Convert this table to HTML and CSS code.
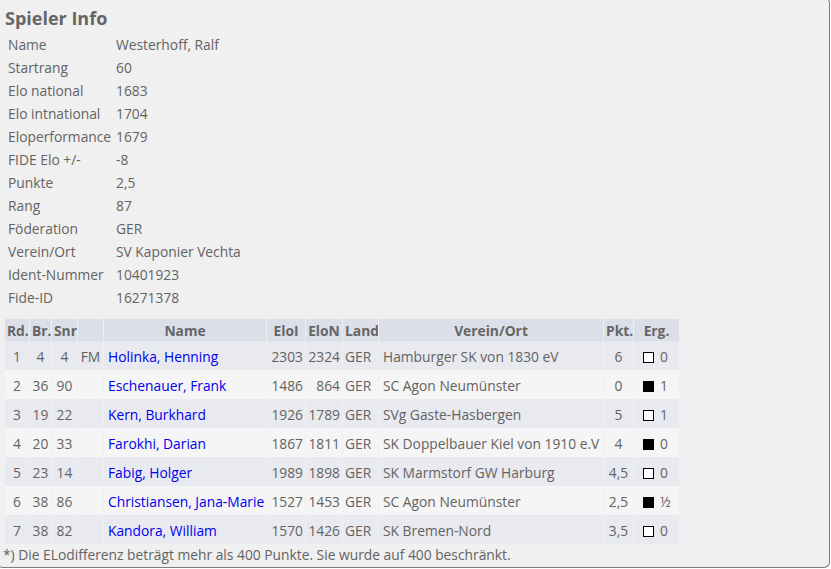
FILE: index.html
```html
<!DOCTYPE html>
<html lang="de">
<head>
<meta charset="utf-8">
<title>Spieler Info</title>
<link rel="stylesheet" href="styles.css">
</head>
<body>
<div class="panel">
  <h2 class="title">Spieler Info</h2>
  <table class="info">
    <tr><td class="lbl">Name</td><td>Westerhoff, Ralf</td></tr>
    <tr><td class="lbl">Startrang</td><td>60</td></tr>
    <tr><td class="lbl">Elo national</td><td>1683</td></tr>
    <tr><td class="lbl">Elo intnational</td><td>1704</td></tr>
    <tr><td class="lbl">Eloperformance</td><td>1679</td></tr>
    <tr><td class="lbl">FIDE Elo +/-</td><td>-8</td></tr>
    <tr><td class="lbl">Punkte</td><td>2,5</td></tr>
    <tr><td class="lbl">Rang</td><td>87</td></tr>
    <tr><td class="lbl">Föderation</td><td>GER</td></tr>
    <tr><td class="lbl">Verein/Ort</td><td>SV Kaponier Vechta</td></tr>
    <tr><td class="lbl">Ident-Nummer</td><td>10401923</td></tr>
    <tr><td class="lbl">Fide-ID</td><td>16271378</td></tr>
  </table>
  <table class="games">
    <thead>
      <tr>
        <th class="c-rd">Rd.</th><th class="c-br">Br.</th><th class="c-snr">Snr</th><th class="c-tit"></th>
        <th class="c-name">Name</th><th class="c-eloi">EloI</th><th class="c-elon">EloN</th><th class="c-land">Land</th>
        <th class="c-verein">Verein/Ort</th><th class="c-pkt">Pkt.</th><th class="c-erg">Erg.</th>
      </tr>
    </thead>
    <tbody>
      <tr class="odd"><td class="ctr">1</td><td class="ctr">4</td><td class="ctr">4</td><td class="ctr">FM</td><td class="name"><a href="#">Holinka, Henning</a></td><td class="num">2303</td><td class="num">2324</td><td class="land">GER</td><td class="verein">Hamburger SK von 1830 eV</td><td class="ctr">6</td><td class="erg"><span class="sq white"></span>0</td></tr>
      <tr class="even"><td class="ctr">2</td><td class="ctr">36</td><td class="ctr">90</td><td class="ctr"></td><td class="name"><a href="#">Eschenauer, Frank</a></td><td class="num">1486</td><td class="num">864</td><td class="land">GER</td><td class="verein">SC Agon Neumünster</td><td class="ctr">0</td><td class="erg"><span class="sq black"></span>1</td></tr>
      <tr class="odd"><td class="ctr">3</td><td class="ctr">19</td><td class="ctr">22</td><td class="ctr"></td><td class="name"><a href="#">Kern, Burkhard</a></td><td class="num">1926</td><td class="num">1789</td><td class="land">GER</td><td class="verein">SVg Gaste-Hasbergen</td><td class="ctr">5</td><td class="erg"><span class="sq white"></span>1</td></tr>
      <tr class="even"><td class="ctr">4</td><td class="ctr">20</td><td class="ctr">33</td><td class="ctr"></td><td class="name"><a href="#">Farokhi, Darian</a></td><td class="num">1867</td><td class="num">1811</td><td class="land">GER</td><td class="verein">SK Doppelbauer Kiel von 1910 e.V</td><td class="ctr">4</td><td class="erg"><span class="sq black"></span>0</td></tr>
      <tr class="odd"><td class="ctr">5</td><td class="ctr">23</td><td class="ctr">14</td><td class="ctr"></td><td class="name"><a href="#">Fabig, Holger</a></td><td class="num">1989</td><td class="num">1898</td><td class="land">GER</td><td class="verein">SK Marmstorf GW Harburg</td><td class="ctr">4,5</td><td class="erg"><span class="sq white"></span>0</td></tr>
      <tr class="even"><td class="ctr">6</td><td class="ctr">38</td><td class="ctr">86</td><td class="ctr"></td><td class="name"><a href="#">Christiansen, Jana-Marie</a></td><td class="num">1527</td><td class="num">1453</td><td class="land">GER</td><td class="verein">SC Agon Neumünster</td><td class="ctr">2,5</td><td class="erg"><span class="sq black"></span>½</td></tr>
      <tr class="odd"><td class="ctr">7</td><td class="ctr">38</td><td class="ctr">82</td><td class="ctr"></td><td class="name"><a href="#">Kandora, William</a></td><td class="num">1570</td><td class="num">1426</td><td class="land">GER</td><td class="verein">SK Bremen-Nord</td><td class="ctr">3,5</td><td class="erg"><span class="sq white"></span>0</td></tr>
    </tbody>
  </table>
  <p class="note">*) Die ELodifferenz beträgt mehr als 400 Punkte. Sie wurde auf 400 beschränkt.</p>
</div>
</body>
</html>
```
FILE: styles.css
```css
html, body {
  margin: 0;
  padding: 0;
  background: #ffffff;
  overflow: hidden;
}
body {
  font-family: "Open Sans", "Noto Sans", sans-serif;
  font-size: 13.8px;
  color: #636363;
}
.panel {
  box-sizing: border-box;
  margin: -3px 0 0 -3px;
  width: 833px;
  height: 571px;
  background: #f0f0f0;
  border: 1px solid #a8a8a8;
  border-right-color: #7c7c7c;
  border-bottom-color: #7c7c7c;
  border-radius: 6px;
  padding: 8px 0 0 7px;
}
.title {
  margin: 0;
  font-size: 18px;
  font-weight: 700;
  line-height: 24px;
  color: #666666;
}
.info {
  border-collapse: collapse;
  margin-top: 3px;
  margin-left: 1px;
}
.info td {
  padding: 0 2px;
  height: 23px;
  line-height: 23px;
  white-space: nowrap;
}
.info td.lbl {
  width: 104px;
}
.games {
  border-collapse: separate;
  border-spacing: 1px 0;
  table-layout: fixed;
  width: 676px;
  margin-top: 10px;
  margin-left: -1px;
}
.games th, .games td {
  box-sizing: border-box;
  padding: 0 2px;
  white-space: nowrap;
  overflow: hidden;
}
.games th {
  height: 22px;
  background: #dcdfe7;
  font-weight: 700;
  text-align: center;
  color: #666666;
}
.games td {
  height: 29px;
  padding-top: 2px;
}
.games tr.odd td { background: #e9eaf0; }
.games tr.even td { background: #f5f5f5; }
.c-rd { width: 24px; }
.c-br { width: 21px; }
.c-snr { width: 25px; }
.c-tit { width: 25px; }
.c-name { width: 162px; }
.c-eloi { width: 38px; }
.c-elon { width: 36px; }
.c-land { width: 35px; }
.c-verein { width: 224px; }
.c-pkt { width: 29px; }
.c-erg { width: 45px; }
.games td.ctr { text-align: center; }
.games td.num { text-align: right; }
.games td.name { padding-left: 4px; }
.games td.land { padding-left: 2px; }
.games td.verein { padding-left: 4px; }
.games td.erg { padding-left: 9px; }
.games a {
  color: #0000ee;
  text-decoration: none;
}
.sq {
  display: inline-block;
  box-sizing: border-box;
  width: 11px;
  height: 11px;
  border: 1px solid #000;
  margin-right: 6px;
  vertical-align: -1px;
}
.sq.white { background: #ffffff; }
.sq.black { background: #000000; }
.note {
  margin: 1px 0 0 -2px;
  line-height: 20px;
}
```
